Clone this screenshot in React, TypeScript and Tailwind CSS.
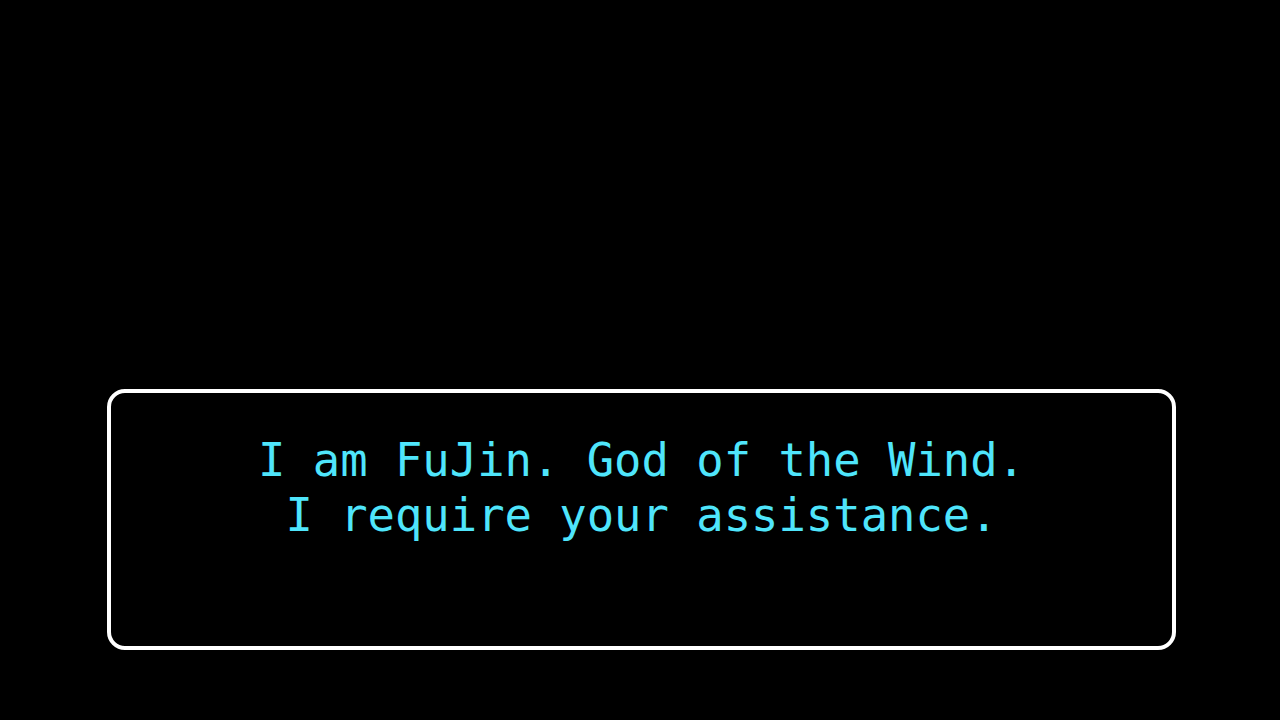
import React from "react";

export default function App() {
  return (
    <div className="w-[1280px] h-[720px] bg-black pt-[389px] pl-[107px] overflow-hidden">
      <div className="w-[1069px] h-[261px] border-[4px] border-white rounded-[18px] bg-black pt-[40px]">
        <div
          className="text-center text-[#4fe5fb] text-[45.5px] leading-[55px] whitespace-pre"
          style={{ fontFamily: '"DejaVu Sans Mono", "Liberation Mono", monospace' }}
        >
          <div>I am FuJin. God of the Wind.</div>
          <div>I require your assistance.</div>
        </div>
      </div>
    </div>
  );
}
